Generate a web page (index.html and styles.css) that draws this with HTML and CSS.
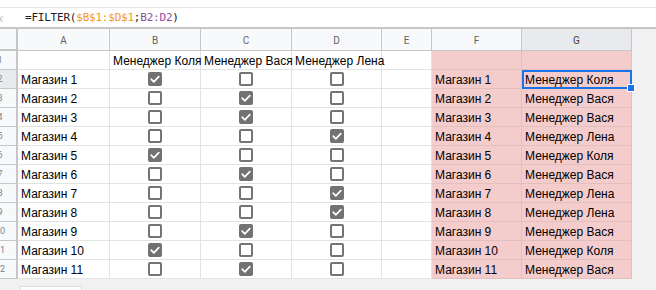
FILE: index.html
```html
<!DOCTYPE html>
<html>
<head>
<meta charset="utf-8">
<link rel="stylesheet" href="styles.css">
</head>
<body>
<div class="formula">
  <span class="fx">fx</span>
  <span class="ftext">=FILTER(<span class="ref1">$B$1:$D$1</span>;<span class="ref2">B2:D2</span>)</span>
</div>
<div class="sheet">
  <div class="corner"></div>
  <div class="ch">A</div><div class="ch">B</div><div class="ch">C</div><div class="ch">D</div><div class="ch">E</div><div class="ch">F</div><div class="ch sel">G</div><div class="gap"></div>

  <div class="rh"><span>1</span></div>
  <div class="c"></div><div class="c">Менеджер Коля</div><div class="c">Менеджер Вася</div><div class="c">Менеджер Лена</div><div class="c"></div><div class="c pink"></div><div class="c pink"></div><div class="gap"></div>

  <div class="rh selrow"><span>2</span></div>
  <div class="c">Магазин 1</div><div class="c cb"><i class="box on"><svg viewBox="0 0 14 14"><polyline points="3.2,7.2 5.8,9.8 10.8,4.6"/></svg></i></div><div class="c cb"><i class="box"></i></div><div class="c cb"><i class="box"></i></div><div class="c"></div><div class="c pink">Магазин 1</div><div class="c pink active">Менеджер Коля<b class="handle"></b></div><div class="gap"></div>

  <div class="rh"><span>3</span></div>
  <div class="c">Магазин 2</div><div class="c cb"><i class="box"></i></div><div class="c cb"><i class="box on"><svg viewBox="0 0 14 14"><polyline points="3.2,7.2 5.8,9.8 10.8,4.6"/></svg></i></div><div class="c cb"><i class="box"></i></div><div class="c"></div><div class="c pink">Магазин 2</div><div class="c pink">Менеджер Вася</div><div class="gap"></div>

  <div class="rh"><span>4</span></div>
  <div class="c">Магазин 3</div><div class="c cb"><i class="box"></i></div><div class="c cb"><i class="box on"><svg viewBox="0 0 14 14"><polyline points="3.2,7.2 5.8,9.8 10.8,4.6"/></svg></i></div><div class="c cb"><i class="box"></i></div><div class="c"></div><div class="c pink">Магазин 3</div><div class="c pink">Менеджер Вася</div><div class="gap"></div>

  <div class="rh"><span>5</span></div>
  <div class="c">Магазин 4</div><div class="c cb"><i class="box"></i></div><div class="c cb"><i class="box"></i></div><div class="c cb"><i class="box on"><svg viewBox="0 0 14 14"><polyline points="3.2,7.2 5.8,9.8 10.8,4.6"/></svg></i></div><div class="c"></div><div class="c pink">Магазин 4</div><div class="c pink">Менеджер Лена</div><div class="gap"></div>

  <div class="rh"><span>6</span></div>
  <div class="c">Магазин 5</div><div class="c cb"><i class="box on"><svg viewBox="0 0 14 14"><polyline points="3.2,7.2 5.8,9.8 10.8,4.6"/></svg></i></div><div class="c cb"><i class="box"></i></div><div class="c cb"><i class="box"></i></div><div class="c"></div><div class="c pink">Магазин 5</div><div class="c pink">Менеджер Коля</div><div class="gap"></div>

  <div class="rh"><span>7</span></div>
  <div class="c">Магазин 6</div><div class="c cb"><i class="box"></i></div><div class="c cb"><i class="box on"><svg viewBox="0 0 14 14"><polyline points="3.2,7.2 5.8,9.8 10.8,4.6"/></svg></i></div><div class="c cb"><i class="box"></i></div><div class="c"></div><div class="c pink">Магазин 6</div><div class="c pink">Менеджер Вася</div><div class="gap"></div>

  <div class="rh"><span>8</span></div>
  <div class="c">Магазин 7</div><div class="c cb"><i class="box"></i></div><div class="c cb"><i class="box"></i></div><div class="c cb"><i class="box on"><svg viewBox="0 0 14 14"><polyline points="3.2,7.2 5.8,9.8 10.8,4.6"/></svg></i></div><div class="c"></div><div class="c pink">Магазин 7</div><div class="c pink">Менеджер Лена</div><div class="gap"></div>

  <div class="rh"><span>9</span></div>
  <div class="c">Магазин 8</div><div class="c cb"><i class="box"></i></div><div class="c cb"><i class="box"></i></div><div class="c cb"><i class="box on"><svg viewBox="0 0 14 14"><polyline points="3.2,7.2 5.8,9.8 10.8,4.6"/></svg></i></div><div class="c"></div><div class="c pink">Магазин 8</div><div class="c pink">Менеджер Лена</div><div class="gap"></div>

  <div class="rh"><span>10</span></div>
  <div class="c">Магазин 9</div><div class="c cb"><i class="box"></i></div><div class="c cb"><i class="box on"><svg viewBox="0 0 14 14"><polyline points="3.2,7.2 5.8,9.8 10.8,4.6"/></svg></i></div><div class="c cb"><i class="box"></i></div><div class="c"></div><div class="c pink">Магазин 9</div><div class="c pink">Менеджер Вася</div><div class="gap"></div>

  <div class="rh"><span>11</span></div>
  <div class="c">Магазин 10</div><div class="c cb"><i class="box on"><svg viewBox="0 0 14 14"><polyline points="3.2,7.2 5.8,9.8 10.8,4.6"/></svg></i></div><div class="c cb"><i class="box"></i></div><div class="c cb"><i class="box"></i></div><div class="c"></div><div class="c pink">Магазин 10</div><div class="c pink">Менеджер Коля</div><div class="gap"></div>

  <div class="rh"><span>12</span></div>
  <div class="c">Магазин 11</div><div class="c cb"><i class="box"></i></div><div class="c cb"><i class="box on"><svg viewBox="0 0 14 14"><polyline points="3.2,7.2 5.8,9.8 10.8,4.6"/></svg></i></div><div class="c cb"><i class="box"></i></div><div class="c"></div><div class="c pink">Магазин 11</div><div class="c pink">Менеджер Вася</div><div class="gap"></div>
</div>
<div class="footer"><div class="tab"></div></div>
</body>
</html>
```

FILE: styles.css
```css
html, body {
  margin: 0;
  padding: 0;
  background: #ffffff;
  width: 656px;
  height: 290px;
  overflow: hidden;
}

.formula {
  margin-top: 7px;
  height: 19px;
  border-top: 1px solid #e6e6e6;
  border-bottom: 2px solid #c6c6c6;
  display: flex;
  align-items: center;
}

.fx {
  font-family: "Liberation Serif", serif;
  font-style: italic;
  font-size: 13px;
  color: #c4c4c4;
  margin-left: -6px;
  width: 31px;
}

.ftext {
  font-family: "DejaVu Sans Mono", monospace;
  font-size: 11px;
  letter-spacing: -0.22px;
  color: #222222;
}

.ref1 { color: #f09a1b; }
.ref2 { color: #8a4ca0; }

.sheet {
  display: grid;
  grid-template-columns: 18px 92px 91px 91px 90px 50px 90px 110px 1fr;
  grid-template-rows: 22px repeat(12, 19px);
  font-family: "Liberation Sans", Arial, sans-serif;
  font-size: 12px;
  color: #000;
}

.corner {
  background: #f8f9fa;
  border-right: 2px solid #c4c7c5;
  border-bottom: 2px solid #c4c7c5;
  box-sizing: border-box;
}

.ch {
  background: #f8f9fa;
  border-right: 1px solid #c4c7c5;
  border-bottom: 1px solid #c4c7c5;
  box-sizing: border-box;
  font-family: Roboto, "Liberation Sans", sans-serif;
  font-size: 10px;
  color: #5f6368;
  display: flex;
  align-items: center;
  justify-content: center;
  padding-top: 1px;
}

.ch.sel {
  background: #e8eaed;
  color: #3c4043;
}

.gap {
  background: #f1f1f1;
}

.rh {
  background: #f8f9fa;
  border-right: 2px solid #c4c7c5;
  border-bottom: 1px solid #c4c7c5;
  box-sizing: border-box;
  overflow: hidden;
  font-family: Roboto, "Liberation Sans", sans-serif;
  font-size: 9px;
  line-height: 18px;
  color: #80868b;
}

.rh span {
  display: block;
  width: 40px;
  margin-left: -20px;
  text-align: center;
}

.rh.selrow {
  background: #e8eaed;
}

.c {
  border-right: 1px solid #e2e3e3;
  border-bottom: 1px solid #e2e3e3;
  box-sizing: border-box;
  padding: 0 3px 1px;
  line-height: 14px;
  display: flex;
  align-items: flex-end;
  white-space: nowrap;
  position: relative;
}

.pink {
  background: #f4cccc;
  border-right-color: #e3c0c0;
  border-bottom-color: #e3c0c0;
}

.cb {
  align-items: center;
  justify-content: center;
  padding: 0 0 1px 0;
}

.box {
  width: 14px;
  height: 14px;
  box-sizing: border-box;
  border: 2px solid #747474;
  border-radius: 2px;
  background: #fff;
  display: block;
}

.box.on {
  background: #727272;
  border-color: #727272;
  position: relative;
}

.box svg {
  position: absolute;
  left: -2px;
  top: -2px;
  width: 14px;
  height: 14px;
}

.box polyline {
  fill: none;
  stroke: #ffffff;
  stroke-width: 1.7;
  stroke-linecap: round;
  stroke-linejoin: round;
}

.active {
  outline: 2px solid #1a73e8;
  outline-offset: -2px;
}

.handle {
  position: absolute;
  right: -4px;
  bottom: -4px;
  width: 6px;
  height: 6px;
  background: #1a73e8;
  border: 1px solid #ffffff;
  z-index: 2;
}

.footer {
  background: #f1f1f1;
  height: 11px;
  overflow: hidden;
}

.tab {
  margin-left: 20px;
  margin-top: 7px;
  width: 62px;
  height: 4px;
  box-sizing: border-box;
  border: 1px solid #dadce0;
  border-bottom: none;
  background: #ffffff;
}
```
